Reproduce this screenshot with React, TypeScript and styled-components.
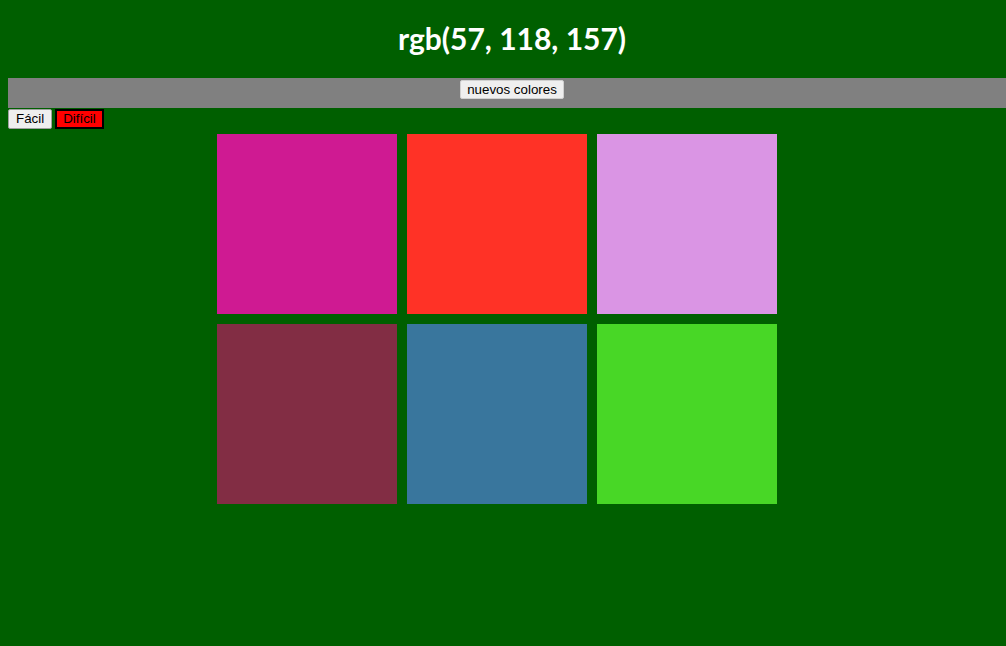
import React, { useState } from 'react';
import styled, { createGlobalStyle } from 'styled-components';

const GlobalStyle = createGlobalStyle`
	body {
		margin: 8px -10px 8px 8px;
		background: #005f00;
		font-family: 'Liberation Sans', Arial, sans-serif;
		overflow-x: hidden;
	}
	html {
		overflow-x: hidden;
	}
`;

const Title = styled.h1`
	margin: 0;
	height: 70px;
	display: flex;
	align-items: center;
	justify-content: center;
	color: #ffffff;
	font-family: Lato, 'Open Sans', sans-serif;
	font-size: 30px;
	font-weight: 700;
	padding-bottom: 10px;
	box-sizing: border-box;
`;

const Bar = styled.div`
	height: 30px;
	background: #808080;
	display: flex;
	justify-content: center;
	align-items: flex-start;
	padding-top: 2px;
	box-sizing: border-box;
`;

const PlainButton = styled.button`
	font-family: 'Liberation Sans', Arial, sans-serif;
	font-size: 13.33px;
	height: 19px;
	padding: 0 6px;
	background: #efefef;
	color: #000;
	border: 1px solid #d0d0d0;
	border-radius: 2px;
	line-height: 17px;
`;

const Modes = styled.div`
	display: flex;
	gap: 3px;
	margin-top: 1px;
`;

const ModeButton = styled.button<{ active?: boolean }>`
	font-family: 'Liberation Sans', Arial, sans-serif;
	font-size: 13.33px;
	height: 20px;
	padding: 0 ${({ active }) => (active ? '6px' : '7px')};
	background: ${({ active }) => (active ? '#ff0000' : '#efefef')};
	color: #000;
	border: ${({ active }) => (active ? '2px solid #000' : '1px solid #a0a0a0')};
	border-radius: ${({ active }) => (active ? '0' : '2px')};
	line-height: 16px;
`;

const Board = styled.div`
	display: grid;
	grid-template-columns: repeat(3, 180px);
	gap: 10px;
	justify-content: center;
	padding-right: 30px;
	margin-top: 5px;
`;

const Square = styled.div<{ color: string }>`
	width: 180px;
	height: 180px;
	background: ${({ color }) => color};
`;

const colors = [
	'rgb(207, 26, 146)',
	'rgb(255, 50, 38)',
	'rgb(218, 149, 228)',
	'rgb(130, 45, 68)',
	'rgb(57, 118, 157)',
	'rgb(72, 215, 38)',
];

function App() {
	const [hard, setHard] = useState(true);
	return (
		<>
			<GlobalStyle />
			<Title>rgb(57, 118, 157)</Title>
			<Bar>
				<PlainButton>nuevos colores</PlainButton>
			</Bar>
			<Modes>
				<ModeButton active={!hard} onClick={() => setHard(false)}>
					Fácil
				</ModeButton>
				<ModeButton active={hard} onClick={() => setHard(true)}>
					Difícil
				</ModeButton>
			</Modes>
			<Board>
				{colors.slice(0, hard ? 6 : 3).map((c) => (
					<Square key={c} color={c} />
				))}
			</Board>
		</>
	);
}

export default App;
